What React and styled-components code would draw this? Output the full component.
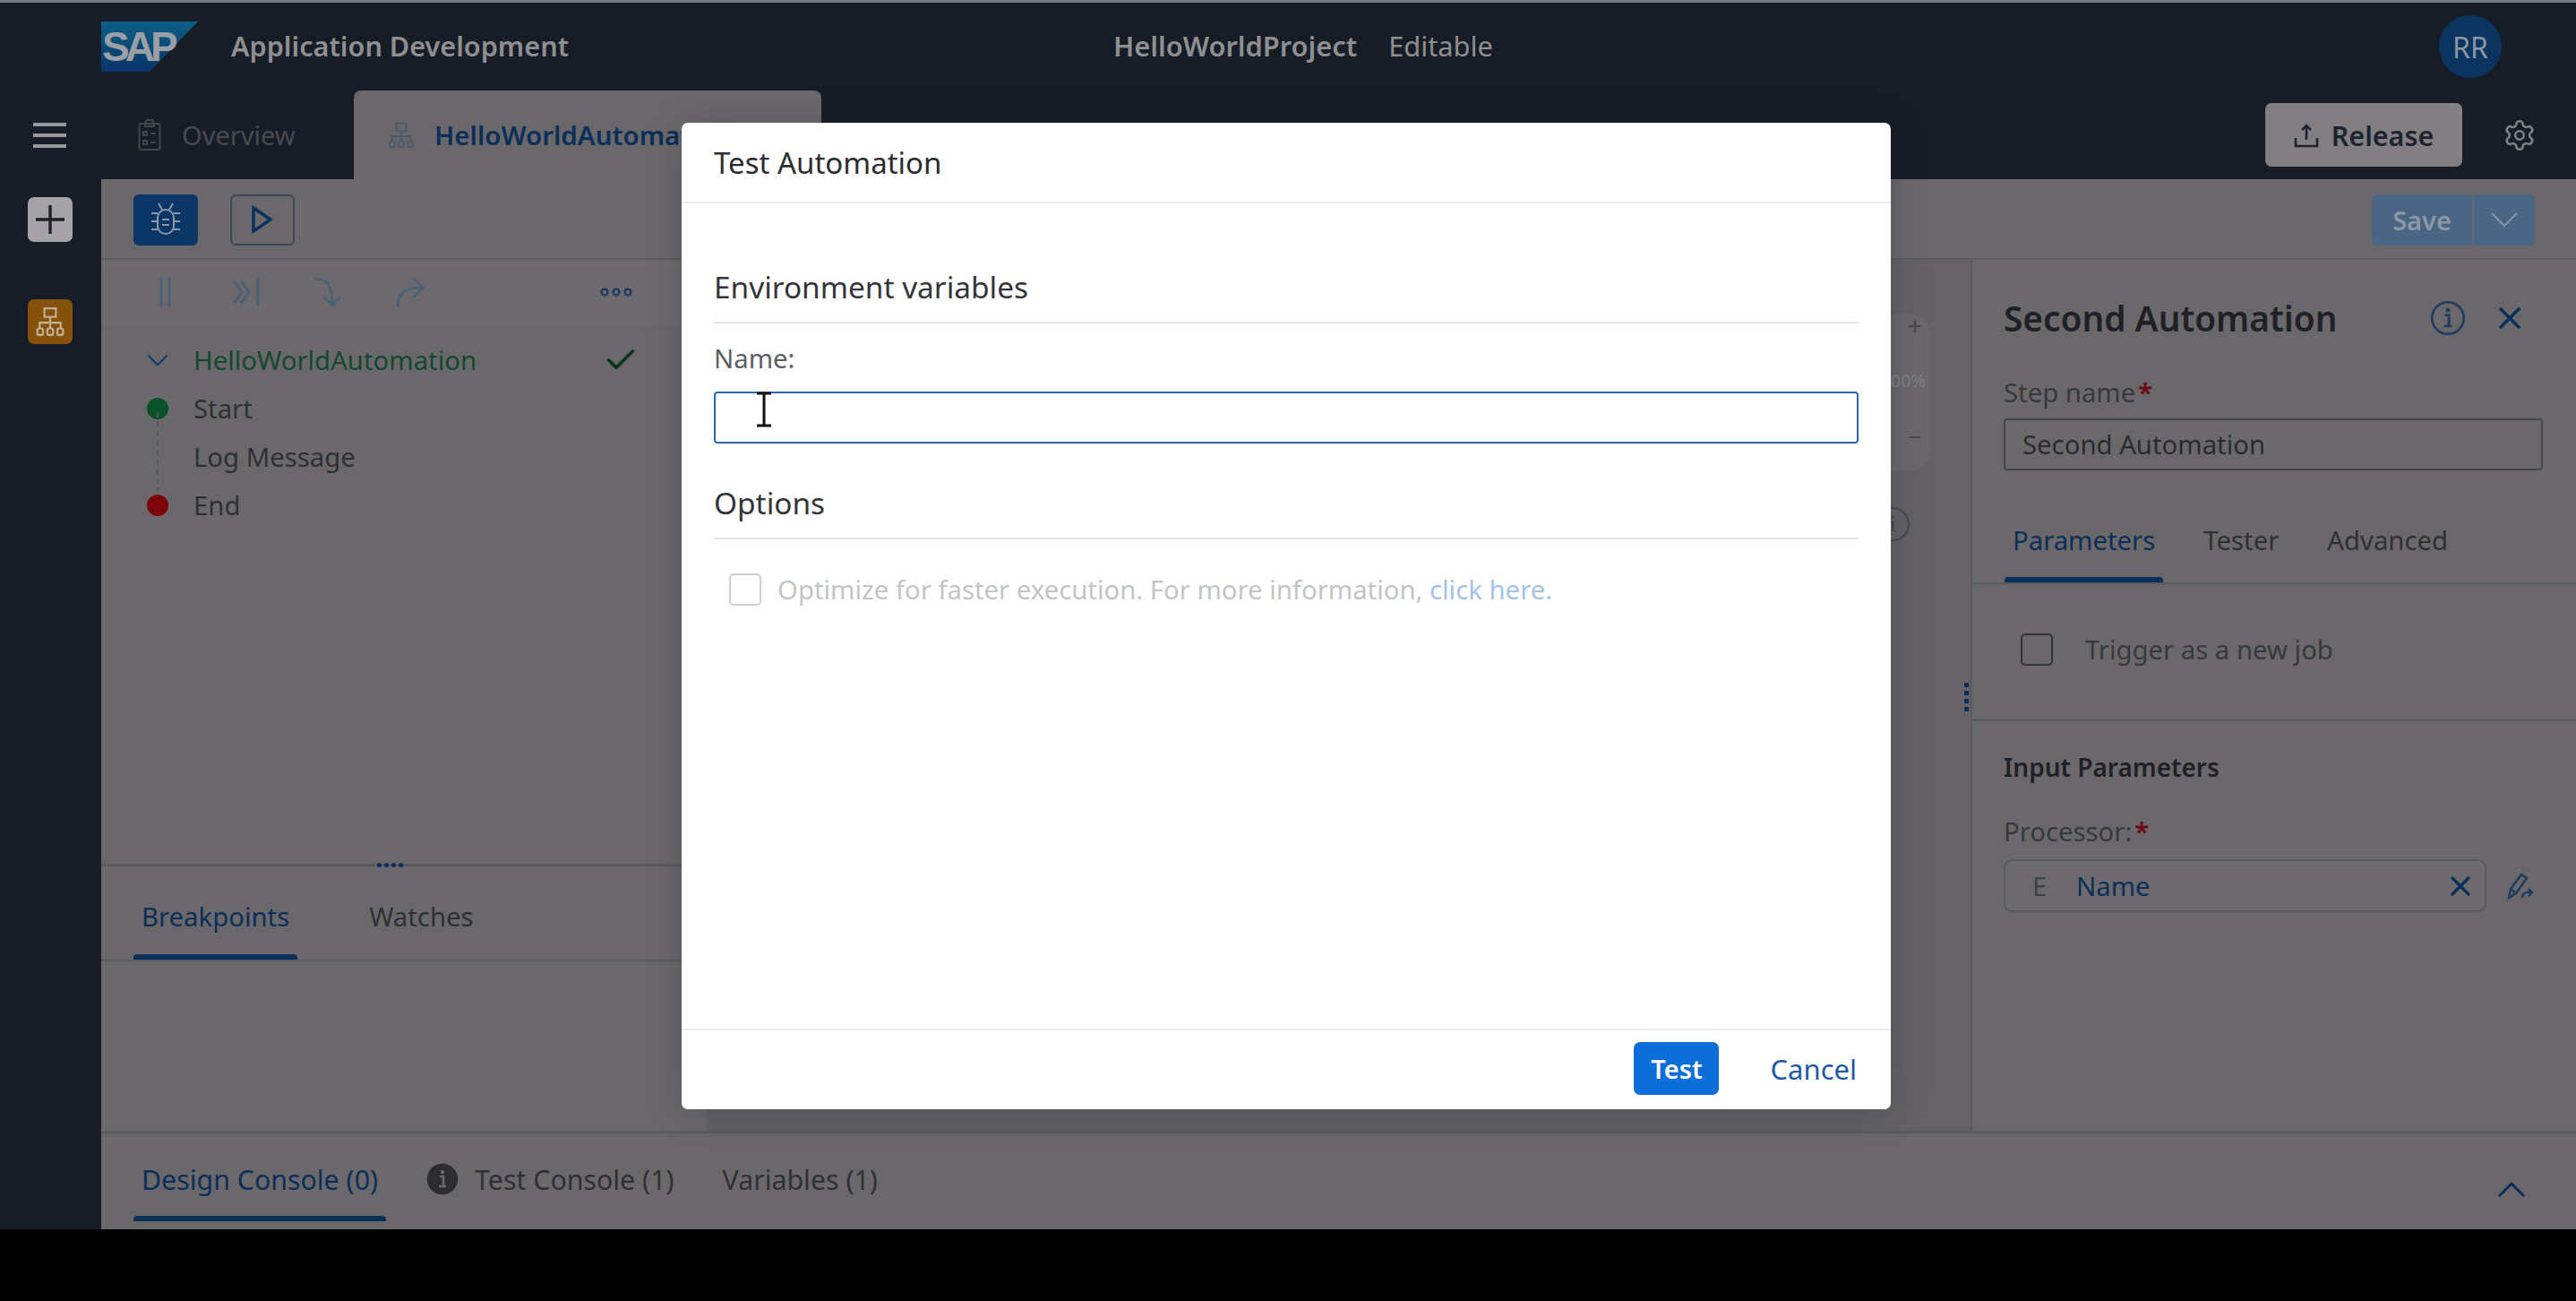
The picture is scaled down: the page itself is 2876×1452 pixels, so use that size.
import styled, { createGlobalStyle } from "styled-components";
import { Settings, X, Check } from "lucide-react";

const GlobalStyle = createGlobalStyle`
    html, body { margin: 0; padding: 0; background: #000; }
    * { box-sizing: border-box; }
    body { font-family: "Noto Sans", "Open Sans", sans-serif; font-size: 29.3px; color: #2b2c30; }
`;

const DARK = "#171d27";
const PANEL = "#6a686b";
const LINE = "#5b5a5d";
const BLUE = "#0a2f58";
const MUTED = "#2f3034";

const Page = styled.div`
    width: 100vw;
    height: 100vh;
    background: #000;
    overflow: hidden;
    position: relative;
`;

const Shell = styled.div`
    height: 1372px;
    display: flex;
    flex-direction: column;
    background: ${DARK};
`;

const TitleBar = styled.header`
    height: 101px;
    border-top: 3px solid #767a80;
    display: grid;
    grid-template-columns: 1130px auto 1fr;
    align-items: center;
    padding: 0 83px 0 113px;
`;

const Brand = styled.div`
    display: flex;
    align-items: center;
    gap: 37px;
`;

const AppName = styled.span`
    font-size: 30.6px;
    font-weight: 600;
    color: #8f8e90;
    margin-bottom: 3px;
`;

const Project = styled.div`
    display: flex;
    align-items: center;
    gap: 35px;
    font-size: 30.8px;
    color: #8f8e90;
    margin-bottom: 3px;
    b { font-weight: 600; }
`;

const Avatar = styled.div`
    justify-self: end;
    width: 70px;
    height: 70px;
    border-radius: 50%;
    background: #0b3460;
    color: #8d97a3;
    font-size: 32px;
    display: flex;
    align-items: center;
    justify-content: center;
`;

const Workspace = styled.div`
    flex: 1;
    min-height: 0;
    display: flex;
`;

const Sidebar = styled.nav`
    width: 113px;
    flex-shrink: 0;
    padding-right: 2px;
    display: flex;
    flex-direction: column;
    align-items: center;
`;

const Burger = styled.div`
    width: 37px;
    height: 99px;
    display: flex;
    flex-direction: column;
    justify-content: center;
    gap: 8px;
    span { display: block; height: 4px; background: #9a999b; }
`;

const SideButton = styled.div`
    width: 50px;
    height: 50px;
    margin-top: ${p => p.$top}px;
    border-radius: 7px;
    background: ${p => p.$bg};
    display: flex;
    align-items: center;
    justify-content: center;
`;

const Main = styled.main`
    flex: 1;
    min-width: 0;
    display: flex;
    flex-direction: column;
`;

const TabBar = styled.div`
    height: 99px;
    flex-shrink: 0;
    display: flex;
    align-items: flex-end;
    padding-right: 44px;
`;

const OverviewTab = styled.div`
    width: 282px;
    height: 99px;
    display: flex;
    align-items: center;
    gap: 23px;
    padding-left: 41px;
    color: #494a4f;
    font-size: 29px;
`;

const ActiveTab = styled.div`
    width: 522px;
    height: 99px;
    background: ${PANEL};
    border-radius: 8px 8px 0 0;
    display: flex;
    align-items: center;
    gap: 22px;
    padding-left: 38px;
    color: ${BLUE};
    font-size: 29.5px;
    font-weight: 600;
    overflow: hidden;
    white-space: nowrap;
`;

const TabActions = styled.div`
    margin-left: auto;
    height: 99px;
    display: flex;
    align-items: center;
    gap: 45px;
`;

const ReleaseButton = styled.div`
    width: 220px;
    height: 71px;
    border-radius: 7px;
    background: #827f82;
    color: #1d2430;
    font-size: 30.5px;
    font-weight: 600;
    display: flex;
    align-items: center;
    justify-content: center;
    gap: 14px;
`;

const Content = styled.div`
    flex: 1;
    min-height: 0;
    background: ${PANEL};
    display: flex;
    flex-direction: column;
`;

const Toolbar = styled.div`
    height: 90px;
    flex-shrink: 0;
    border-bottom: 2px solid ${LINE};
    display: flex;
    align-items: center;
    padding: 0 46px 0 36px;
    gap: 36px;
`;

const ToolButton = styled.div`
    width: 72px;
    height: 57px;
    margin-top: 2px;
    border-radius: 6px;
    display: flex;
    align-items: center;
    justify-content: center;
    background: ${p => (p.$solid ? "#0a3668" : "transparent")};
    border: 2px solid ${p => (p.$solid ? "#0a3668" : "#3d4a5c")};
`;

const SaveGroup = styled.div`
    margin-left: auto;
    margin-top: 2px;
    width: 182px;
    height: 57px;
    display: flex;
    gap: 2px;
    color: #8c98a6;
    font-size: 29px;
    font-weight: 600;
`;

const SavePart = styled.div`
    flex: ${p => p.$grow};
    background: #4a6684;
    border-radius: ${p => p.$radius};
    display: flex;
    align-items: center;
    justify-content: center;
`;

const Body = styled.div`
    flex: 1;
    min-height: 0;
    display: flex;
`;

const LeftColumn = styled.section`
    width: 676px;
    flex-shrink: 0;
    display: flex;
    flex-direction: column;
`;

const DebugBar = styled.div`
    height: 74px;
    flex-shrink: 0;
    background: #6c6a6d;
    display: flex;
    align-items: center;
    padding: 0 83px 3px 63px;
    gap: 59px;
    svg:first-child { margin-right: 6px; }
    svg:last-child { margin-left: auto; }
`;

const Tree = styled.div`
    height: 603px;
    flex-shrink: 0;
    padding-top: 11px;
    border-bottom: 3px solid ${LINE};
    position: relative;
`;

const TreeRow = styled.div`
    height: 54px;
    display: flex;
    align-items: center;
    padding-left: 51px;
    position: relative;
    color: ${p => p.$color || MUTED};
`;

const TreeSlot = styled.div`
    width: 24px;
    margin-right: 28px;
    display: flex;
    justify-content: center;
`;

const Dot = styled.span`
    width: 24px;
    height: 24px;
    border-radius: 50%;
    background: ${p => p.$color};
`;

const TreeCheck = styled(Check)`
    margin-left: auto;
    margin-right: 76px;
`;

const Connector = styled.span`
    position: absolute;
    left: 62px;
    top: 96px;
    height: 90px;
    border-left: 2px dashed #57565a;
`;

const GripRow = styled.div`
    position: absolute;
    left: 308px;
    bottom: -4px;
    display: flex;
    gap: 3px;
    span { width: 5px; height: 5px; background: ${BLUE}; border-radius: 50%; }
`;

const TabStrip = styled.div`
    height: ${p => p.$height}px;
    flex-shrink: 0;
    display: flex;
    align-items: stretch;
    gap: ${p => p.$gap || 0}px;
    padding: ${p => p.$top || 0}px 0 0 36px;
    border-bottom: ${p => (p.$line ? `2px solid ${LINE}` : "none")};
`;

const TabItem = styled.div`
    position: relative;
    display: flex;
    align-items: center;
    gap: 18px;
    padding: 0 9px;
    color: ${p => (p.$active ? BLUE : MUTED)};
    white-space: nowrap;
    &::after {
        content: "";
        display: ${p => (p.$active ? "block" : "none")};
        position: absolute;
        left: 0;
        right: 0;
        bottom: 0;
        height: 6px;
        background: ${BLUE};
        border-radius: 4px 4px 0 0;
    }
`;

const Canvas = styled.section`
    flex: 1;
    min-width: 0;
    position: relative;
    background: #646265;
`;

const ZoomPanel = styled.div`
    position: absolute;
    right: 45px;
    top: 60px;
    width: 160px;
    height: 176px;
    background: #6a686b;
    border-radius: 24px;
    color: #807f82;
    font-size: 20px;
    line-height: 26px;
    display: flex;
    flex-direction: column;
    align-items: flex-end;
    gap: 36px;
    padding-right: 5px;
    span:not(:nth-child(2)) { color: #47464a; font-size: 28px; margin-right: 4px; }
`;

const CanvasInfo = styled.div`
    position: absolute;
    right: 68px;
    top: 276px;
    width: 38px;
    height: 38px;
    border: 2px solid #4a494c;
    border-radius: 50%;
    display: flex;
    align-items: center;
    justify-content: center;
    color: #47464a;
    font-family: "Liberation Serif", serif;
    font-size: 26px;
`;

const Handle = styled.div`
    position: absolute;
    right: 2px;
    top: 472px;
    display: flex;
    flex-direction: column;
    gap: 4px;
    span { width: 5px; height: 5px; background: ${BLUE}; }
`;

const RightPanel = styled.aside`
    width: 676px;
    flex-shrink: 0;
    border-left: 2px solid ${LINE};
    display: flex;
    flex-direction: column;
`;

const PanelHead = styled.div`
    height: 130px;
    display: flex;
    align-items: center;
    padding: 0 54px 0 35px;
    font-size: 38.8px;
    font-weight: 600;
    color: #1f2126;
    white-space: nowrap;
    svg:first-of-type { margin-left: auto; margin-right: 29px; }
`;

const FieldLabel = styled.div`
    padding-left: 35px;
    height: 36px;
    display: flex;
    align-items: center;
    color: #38393d;
    b { color: #6d0c17; font-weight: 700; margin-left: 3px; }
`;

const StepInput = styled.div`
    width: 602px;
    height: 58px;
    margin: 11px 0 0 35px;
    border: 2px solid #47474b;
    border-radius: 4px;
    padding-left: 19px;
    display: flex;
    align-items: center;
    color: #2a2b2f;
`;

const TriggerRow = styled.div`
    height: 153px;
    border-bottom: 3px solid ${LINE};
    display: flex;
    align-items: center;
    gap: 36px;
    padding: 0 0 4px 54px;
    color: #38393d;
`;

const Box = styled.span`
    width: ${p => p.$size}px;
    height: ${p => p.$size}px;
    flex-shrink: 0;
    border: 2px solid ${p => p.$color};
    border-radius: 5px;
    display: block;
`;

const SectionTitle = styled.div`
    height: 105px;
    display: flex;
    align-items: center;
    padding: 0 0 3px 35px;
    font-size: 28px;
    font-weight: 600;
    color: #1f2126;
`;

const ProcessorRow = styled.div`
    display: flex;
    align-items: center;
    padding: 13px 0 0 35px;
    gap: 22px;
`;

const TokenField = styled.div`
    width: 539px;
    height: 59px;
    border: 2px solid #5a595c;
    border-radius: 9px;
    background: #6c6a6d;
    display: flex;
    align-items: center;
    padding: 0 9px 0 30px;
    color: ${BLUE};
    span:first-child { color: #3f4044; width: 49px; font-size: 29px; }
    svg { margin-left: auto; }
`;

const Console = styled.footer`
    height: 110px;
    flex-shrink: 0;
    border-top: 3px solid ${LINE};
    display: flex;
    align-items: stretch;
    padding-right: 58px;
    font-size: 30.3px;
`;

const ConsoleTabs = styled(TabStrip)`
    flex: 1;
    height: auto;
    margin-bottom: 9px;
`;

const Collapse = styled.div`
    display: flex;
    align-items: center;
    padding: 18px 0 0 2px;
    margin-right: -2px;
`;

const Dialog = styled.div`
    position: absolute;
    left: 761px;
    top: 137px;
    width: 1350px;
    height: 1101px;
    background: #fff;
    border-radius: 7px;
    box-shadow: 0 4px 44px rgba(0, 0, 0, 0.18);
    display: flex;
    flex-direction: column;
`;

const DialogHead = styled.div`
    height: 90px;
    flex-shrink: 0;
    border-bottom: 2px solid #ecebee;
    display: flex;
    align-items: center;
    padding-left: 36px;
    font-size: 33px;
    color: #2c2d31;
`;

const DialogBody = styled.div`
    flex: 1;
    min-height: 0;
    padding: 0 36px;
`;

const GroupTitle = styled.div`
    height: ${p => p.$height}px;
    display: flex;
    align-items: flex-end;
    padding-bottom: 16px;
    border-bottom: 2px solid #e6e6e8;
    font-size: 33.4px;
    color: #34353a;
`;

const NameLabel = styled.div`
    height: 76px;
    padding-top: 2px;
    display: flex;
    align-items: center;
    color: #5d5e63;
`;

const NameInput = styled.div`
    height: 58px;
    border: 2px solid #2a69b0;
    border-radius: 4px;
    position: relative;
`;

const TextCursor = styled.svg`
    position: absolute;
    left: 43px;
    top: -2px;
`;

const OptionRow = styled.div`
    height: 78px;
    margin-top: 17px;
    display: flex;
    align-items: center;
    gap: 18px;
    padding-left: 17px;
    color: #c3c4c7;
    a { color: #a4c2e8; text-decoration: none; }
`;

const DialogFoot = styled.div`
    height: 90px;
    flex-shrink: 0;
    border-top: 2px solid #ecebee;
    display: flex;
    align-items: center;
    justify-content: flex-end;
    gap: 57px;
    padding: 0 38px 3px 0;
`;

const TestButton = styled.div`
    width: 95px;
    height: 59px;
    border-radius: 7px;
    background: #0d6ed9;
    color: #fff;
    font-size: 29px;
    font-weight: 600;
    display: flex;
    align-items: center;
    justify-content: center;
`;

const CancelLink = styled.div`
    color: #1f5aa3;
    font-size: 31px;
`;

const SapLogo = () => (
    <svg width="108" height="56" viewBox="0 0 108 56">
        <defs>
            <linearGradient id="sapGrad" x1="0" y1="0" x2="0" y2="1">
                <stop offset="0" stopColor="#0c5f85" />
                <stop offset="1" stopColor="#0a3468" />
            </linearGradient>
        </defs>
        <path d="M0 0H108L54 56H0Z" fill="url(#sapGrad)" />
        <text x="1" y="44" fontFamily="Liberation Sans" fontWeight="700" fontSize="46" letterSpacing="-5" fill="#9a9ea5">SAP</text>
    </svg>
);

const Chevron = ({ up, color = BLUE, width = 3 }) => (
    <svg width="32" height="18" viewBox="0 0 32 18" fill="none" stroke={color} strokeWidth={width}>
        <path d={up ? "M2 16L16 2L30 16" : "M2 2L16 16L30 2"} />
    </svg>
);

const Hierarchy = ({ size = 30, color }) => (
    <svg width={size} height={size} viewBox="0 0 30 32" fill="none" stroke={color} strokeWidth="2">
        <rect x="9" y="2" width="12" height="9" />
        <path d="M15 11V17M4 23V17H26V23M15 17V23" />
        <rect x="1.5" y="23" width="6" height="7" rx="2" />
        <rect x="12" y="23" width="6" height="7" rx="2" />
        <rect x="22.5" y="23" width="6" height="7" rx="2" />
    </svg>
);

const ClipboardIcon = () => (
    <svg width="26" height="36" viewBox="0 0 26 36" fill="none" stroke="#44454a" strokeWidth="2">
        <rect x="1.5" y="5" width="23" height="29" rx="2" />
        <path d="M8 5L10 1H16L18 5V8H8Z" />
        <path d="M6 14H10V18H6ZM6 24H10V28H6ZM14 16H20M14 26H20" />
    </svg>
);

const BugIcon = () => (
    <svg width="34" height="38" viewBox="0 0 34 38" fill="none" stroke="#8f99a6" strokeWidth="2">
        <rect x="8" y="8" width="18" height="27" rx="9" />
        <path d="M9 1L13 8M25 1L21 8M1 12H8M1 21H8M1 30H8M33 12H26M33 21H26M33 30H26M13 19H21M13 25H21" />
    </svg>
);

const PlayIcon = () => (
    <svg width="26" height="32" viewBox="0 0 26 32" fill="none" stroke="#0a3060" strokeWidth="3.4">
        <path d="M3 3L22 16L3 29Z" />
    </svg>
);

const PauseIcon = () => (
    <svg width="18" height="36" viewBox="0 0 18 36" stroke="#4d6075" strokeWidth="3">
        <path d="M4 1V35M13 1V35" />
    </svg>
);

const StepIcon = () => (
    <svg width="32" height="34" viewBox="0 0 32 34" fill="none" stroke="#4d6075" strokeWidth="3">
        <path d="M2 4L11 17L2 30M10 4L19 17L10 30M29 1V33" />
    </svg>
);

const StepInIcon = () => (
    <svg width="32" height="36" viewBox="0 0 32 36" fill="none" stroke="#4d6075" strokeWidth="3">
        <path d="M1 3C14 3 21 9 21 32M11 23L21 33L30 23" />
    </svg>
);

const RedoIcon = () => (
    <svg width="34" height="36" viewBox="0 0 34 36" fill="none" stroke="#4d6075" strokeWidth="3">
        <path d="M3 35C3 20 10 13 30 13M20 2L31 13L20 24" />
    </svg>
);

const MoreIcon = () => (
    <svg width="36" height="12" viewBox="0 0 36 12" fill="none" stroke="#1e3c62" strokeWidth="2.4">
        <circle cx="5" cy="6" r="3.4" />
        <circle cx="18" cy="6" r="3.4" />
        <circle cx="31" cy="6" r="3.4" />
    </svg>
);

const UploadIcon = () => (
    <svg width="28" height="28" viewBox="0 0 28 28" fill="none" stroke="#1d2430" strokeWidth="2.6">
        <path d="M14 19V3M9 8L14 3L19 8M2 17V26H26V17" />
    </svg>
);

const InfoIcon = ({ size, color, filled }) => (
    <svg width={size} height={size} viewBox="0 0 36 36">
        <circle cx="18" cy="18" r="16" fill={filled ? color : "none"} stroke={color} strokeWidth="2.4" />
        <path d="M15 15H19V26H22M14 26H22" fill="none" stroke={filled ? PANEL : color} strokeWidth="2.6" />
        <circle cx="18" cy="10" r="2.2" fill={filled ? PANEL : color} />
    </svg>
);

const EditIcon = () => (
    <svg width="32" height="32" viewBox="0 0 32 32" fill="none" stroke="#1e3c62" strokeWidth="2.4">
        <path d="M3 29L5 19L17 3L23 7L11 24Z" />
        <path d="M5 19L11 24M18 29C18 24 22 22 29 23M25 19L29 23L25 27" />
    </svg>
);

const App = () => (
    <Page>
        <GlobalStyle />
        <Shell>
            <TitleBar>
                <Brand>
                    <SapLogo />
                    <AppName>Application Development</AppName>
                </Brand>
                <Project>
                    <b>HelloWorldProject</b>
                    <span>Editable</span>
                </Project>
                <Avatar>RR</Avatar>
            </TitleBar>
            <Workspace>
                <Sidebar>
                    <Burger><span /><span /><span /></Burger>
                    <SideButton $top={20} $bg="#a5a3a5">
                        <svg width="34" height="34" viewBox="0 0 34 34" stroke="#1e2027" strokeWidth="3.4"><path d="M17 1V33M1 17H33" /></svg>
                    </SideButton>
                    <SideButton $top={64} $bg="#84520c">
                        <Hierarchy size={34} color="#c5b295" />
                    </SideButton>
                </Sidebar>
                <Main>
                    <TabBar>
                        <OverviewTab><ClipboardIcon />Overview</OverviewTab>
                        <ActiveTab><Hierarchy color="#4a5a6d" />HelloWorldAutomation</ActiveTab>
                        <TabActions>
                            <ReleaseButton><UploadIcon />Release</ReleaseButton>
                            <Settings size={38} color="#7f8185" strokeWidth={1.6} />
                        </TabActions>
                    </TabBar>
                    <Content>
                        <Toolbar>
                            <ToolButton $solid><BugIcon /></ToolButton>
                            <ToolButton><PlayIcon /></ToolButton>
                            <SaveGroup>
                                <SavePart $grow={112} $radius="6px 0 0 6px">Save</SavePart>
                                <SavePart $grow={68} $radius="0 6px 6px 0"><Chevron color="#8c98a6" width={1.8} /></SavePart>
                            </SaveGroup>
                        </Toolbar>
                        <Body>
                            <LeftColumn>
                                <DebugBar>
                                    <PauseIcon />
                                    <StepIcon />
                                    <StepInIcon />
                                    <RedoIcon />
                                    <MoreIcon />
                                </DebugBar>
                                <Tree>
                                    <TreeRow $color="#144830">
                                        <TreeSlot><Chevron color="#0b3a70" width={2.6} /></TreeSlot>
                                        HelloWorldAutomation
                                        <TreeCheck size={40} color="#0c3520" strokeWidth={2.2} />
                                    </TreeRow>
                                    <TreeRow>
                                        <TreeSlot><Dot $color="#085028" /></TreeSlot>
                                        Start
                                    </TreeRow>
                                    <TreeRow>
                                        <TreeSlot />
                                        Log Message
                                    </TreeRow>
                                    <TreeRow>
                                        <TreeSlot><Dot $color="#7c050c" /></TreeSlot>
                                        End
                                    </TreeRow>
                                    <Connector />
                                    <GripRow><span /><span /><span /><span /></GripRow>
                                </Tree>
                                <TabStrip $height={106} $gap={71} $top={8} $line>
                                    <TabItem $active>Breakpoints</TabItem>
                                    <TabItem>Watches</TabItem>
                                </TabStrip>
                            </LeftColumn>
                            <Canvas>
                                <ZoomPanel><span>+</span><span>100%</span><span>−</span></ZoomPanel>
                                <CanvasInfo>i</CanvasInfo>
                                <Handle><span /><span /><span /><span /></Handle>
                            </Canvas>
                            <RightPanel>
                                <PanelHead>
                                    Second Automation
                                    <InfoIcon size={40} color="#1e3c62" />
                                    <X size={40} color={BLUE} strokeWidth={2.2} />
                                </PanelHead>
                                <FieldLabel>Step name<b>*</b></FieldLabel>
                                <StepInput>Second Automation</StepInput>
                                <TabStrip $height={127} $gap={36} $top={30} $line>
                                    <TabItem $active>Parameters</TabItem>
                                    <TabItem>Tester</TabItem>
                                    <TabItem>Advanced</TabItem>
                                </TabStrip>
                                <TriggerRow>
                                    <Box $size={36} $color="#333437" />
                                    Trigger as a new job
                                </TriggerRow>
                                <SectionTitle>Input Parameters</SectionTitle>
                                <FieldLabel>Processor:<b>*</b></FieldLabel>
                                <ProcessorRow>
                                    <TokenField>
                                        <span>E</span>
                                        <span>Name</span>
                                        <X size={36} color={BLUE} strokeWidth={2.2} />
                                    </TokenField>
                                    <EditIcon />
                                </ProcessorRow>
                            </RightPanel>
                        </Body>
                        <Console>
                            <ConsoleTabs $gap={36} $top={4}>
                                <TabItem $active>Design Console (0)</TabItem>
                                <TabItem><InfoIcon size={36} color="#2d2d31" filled />Test Console (1)</TabItem>
                                <TabItem>Variables (1)</TabItem>
                            </ConsoleTabs>
                            <Collapse><Chevron up /></Collapse>
                        </Console>
                    </Content>
                </Main>
            </Workspace>
        </Shell>
        <Dialog>
            <DialogHead>Test Automation</DialogHead>
            <DialogBody>
                <GroupTitle $height={134}>Environment variables</GroupTitle>
                <NameLabel>Name:</NameLabel>
                <NameInput>
                    <TextCursor width="22" height="40" viewBox="0 0 22 40" fill="none" stroke="#111" strokeWidth="3">
                        <path d="M3 2H19M11 2V38M3 38H19" />
                    </TextCursor>
                </NameInput>
                <GroupTitle $height={107}>Options</GroupTitle>
                <OptionRow>
                    <Box $size={36} $color="#cfd0d2" />
                    <span>Optimize for faster execution. For more information, <a>click here.</a></span>
                </OptionRow>
            </DialogBody>
            <DialogFoot>
                <TestButton>Test</TestButton>
                <CancelLink>Cancel</CancelLink>
            </DialogFoot>
        </Dialog>
    </Page>
);

export default App;
